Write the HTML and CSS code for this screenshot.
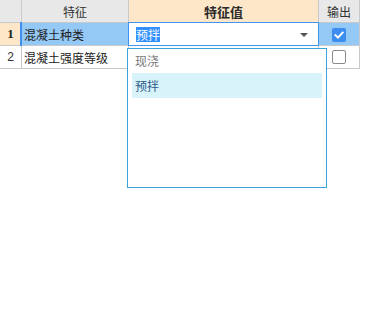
FILE: index.html
```html
<!DOCTYPE html>
<html lang="zh">
<head>
<meta charset="utf-8">
<title>特征</title>
<link rel="stylesheet" href="styles.css">
</head>
<body>
<div class="sheet">
  <div class="grid">
    <div class="cell head corner"></div>
    <div class="cell head">特征</div>
    <div class="cell head value-head">特征值</div>
    <div class="cell head">输出</div>

    <div class="cell num num-active">1</div>
    <div class="cell name name-active">混凝土种类</div>
    <div class="cell editor-cell">
      <div class="editor">
        <span class="sel">预拌</span>
        <span class="arrow"></span>
      </div>
    </div>
    <div class="cell out out-active">
      <span class="check checked">
        <svg width="14" height="14" viewBox="0 0 14 14"><path d="M3.5 7.2 L6 9.6 L10.6 4.6" fill="none" stroke="#fff" stroke-width="2" stroke-linecap="square"/></svg>
      </span>
    </div>

    <div class="cell num">2</div>
    <div class="cell name">混凝土强度等级</div>
    <div class="cell"></div>
    <div class="cell out"><span class="check"></span></div>
  </div>

  <div class="dropdown">
    <div class="item">现浇</div>
    <div class="item item-active">预拌</div>
  </div>
</div>
</body>
</html>
```

FILE: styles.css
```css
html, body {
  margin: 0;
  padding: 0;
  background: #ffffff;
}

body {
  font-family: "Noto Sans CJK SC", "Noto Sans", sans-serif;
  font-size: 12px;
  color: #333333;
}

.sheet {
  position: relative;
  width: 391px;
  height: 313px;
}

.grid {
  display: grid;
  grid-template-columns: 22px 107px 190px 41px;
  grid-auto-rows: 23px;
  width: 360px;
}

.cell {
  box-sizing: border-box;
  border-right: 1px solid #c9c9c9;
  border-bottom: 1px solid #c9c9c9;
  display: flex;
  align-items: center;
  position: relative;
  white-space: nowrap;
}

.head {
  background: #e8e8e8;
  justify-content: center;
  color: #333333;
}

.value-head {
  background: #fee7c9;
  font-weight: bold;
  font-size: 13px;
  color: #2b2b2b;
}

.num {
  justify-content: center;
  font-family: "Liberation Sans", sans-serif;
  font-size: 12px;
  color: #333333;
}

.num-active {
  background: #fee6c9;
  font-family: "Liberation Serif", serif;
  font-weight: bold;
  font-size: 13px;
  color: #222222;
}

.name {
  padding-left: 2px;
  color: #222222;
}

.name-active {
  background: #94c8f5;
}

.name-active::before {
  content: "";
  position: absolute;
  left: -2px;
  top: -1px;
  bottom: -1px;
  width: 2px;
  background: #3f8fef;
}

.editor {
  position: absolute;
  left: -1px;
  top: -1px;
  right: -1px;
  bottom: -1px;
  border: 1px solid #3d95ef;
  background: #ffffff;
  display: flex;
  align-items: center;
  padding-left: 7px;
}

.sel {
  background: #3390ff;
  color: #ffffff;
  line-height: 15px;
  font-size: 12px;
}

.arrow {
  position: absolute;
  right: 10px;
  top: 10px;
  width: 0;
  height: 0;
  border-left: 4px solid transparent;
  border-right: 4px solid transparent;
  border-top: 4px solid #555555;
}

.out {
  justify-content: center;
}

.out-active {
  background: #94c8f5;
}

.check {
  box-sizing: border-box;
  width: 14px;
  height: 14px;
  border: 1px solid #8a8a8a;
  border-radius: 2px;
  background: #ffffff;
  display: block;
}

.check.checked {
  border: none;
  background: #3d8def;
  margin-top: 1px;
}

.check svg {
  display: block;
}

.dropdown {
  position: absolute;
  left: 127px;
  top: 48px;
  width: 200px;
  height: 140px;
  box-sizing: border-box;
  border: 1px solid #3aa4d8;
  background: #ffffff;
  padding: 0 4px;
}

.item {
  height: 24px;
  line-height: 24px;
  padding-left: 3px;
  color: #777777;
}

.item-active {
  height: 25px;
  line-height: 25px;
  background: #d9f3fa;
  color: #2a5b88;
}
```
